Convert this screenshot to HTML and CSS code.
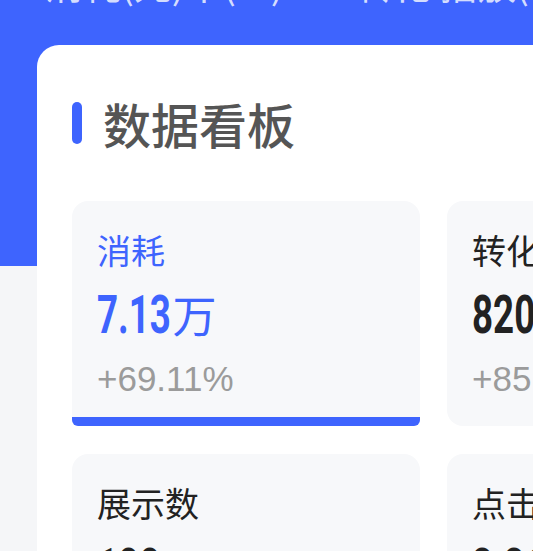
FILE: index.html
```html
<!DOCTYPE html>
<html lang="zh-CN">
<head>
<meta charset="utf-8">
<title>数据看板</title>
<link rel="stylesheet" href="styles.css">
</head>
<body>
<div class="page">
  <div class="hero-stats">
    <span class="hs hs1">消耗(元)</span>
    <span class="hs hs2">率(%)</span>
    <span class="hs hs3">转化</span>
    <span class="hs hs4">播放(</span>
  </div>
  <section class="board">
    <h2 class="board-title"><span class="title-bar"></span>数据看板</h2>
    <div class="metrics">
      <div class="metric active">
        <div class="metric-label">消耗</div>
        <div class="metric-value"><span class="num">7.13</span><span class="unit">万</span></div>
        <div class="metric-change">+69.11%</div>
      </div>
      <div class="metric">
        <div class="metric-label">转化数</div>
        <div class="metric-value"><span class="num">820</span></div>
        <div class="metric-change">+85.23%</div>
      </div>
      <div class="metric">
        <div class="metric-label">展示数</div>
        <div class="metric-value"><span class="num">188</span><span class="unit">万</span></div>
        <div class="metric-change">+42.56%</div>
      </div>
      <div class="metric">
        <div class="metric-label">点击数</div>
        <div class="metric-value"><span class="num">3.36</span><span class="unit">万</span></div>
        <div class="metric-change">+31.08%</div>
      </div>
    </div>
  </section>
</div>
</body>
</html>
```

FILE: styles.css
```css
html, body {
  margin: 0;
  padding: 0;
}
body {
  width: 533px;
  height: 551px;
  overflow: hidden;
  background: linear-gradient(#3e64fe 0, #3e64fe 266px, #f5f6f8 266px);
  font-family: "Noto Sans CJK SC", "Noto Sans", sans-serif;
}
.page {
  width: 900px;
}
.hero-stats {
  display: flex;
  height: 81px;
  margin-top: -36px;
  color: rgba(255, 255, 255, 0.8);
  font-size: 38px;
  line-height: 38px;
}
.hs { display: block; }
.hs1 { margin-left: 45px; width: 140px; }
.hs2 { width: 170px; }
.hs3 { width: 85px; }
.board {
  margin-left: 37px;
  width: 793px;
  background: #fff;
  border-radius: 22px;
  padding: 55px 35px 40px;
  box-sizing: border-box;
  min-height: 700px;
}
.board-title {
  display: flex;
  align-items: center;
  margin: 0;
  font-size: 48px;
  line-height: 48px;
  height: 46px;
  font-weight: 500;
  color: #555;
}
.title-bar {
  display: block;
  width: 10px;
  height: 42px;
  border-radius: 5px;
  background: #3e64fe;
  margin-right: 21px;
}
.metrics {
  margin-top: 55px;
  display: grid;
  grid-template-columns: 348px 348px;
  column-gap: 27px;
  row-gap: 28px;
}
.metric {
  height: 225px;
  box-sizing: border-box;
  background: #f7f8fa;
  border-radius: 16px;
  padding: 31px 25px 0;
  display: flex;
  flex-direction: column;
}
.metric.active {
  border-bottom: 9px solid #3e64fe;
  border-radius: 16px 16px 6px 6px;
}
.metric-label {
  font-size: 34px;
  line-height: 36px;
  color: #222;
}
.metric.active .metric-label { color: #3e64fe; }
.metric-value {
  margin-top: 20px;
  height: 53px;
  line-height: 53px;
  color: #222;
  display: flex;
  align-items: baseline;
}
.metric.active .metric-value { color: #3e64fe; }
.num {
  display: inline-block;
  font-family: Roboto, "Liberation Sans", sans-serif;
  font-weight: 700;
  font-size: 54px;
  transform: scaleX(0.68);
  transform-origin: left center;
}
.metric.active .num { margin-right: -34px; }
.metric:nth-child(3) .num { margin-right: -29px; }
.metric:nth-child(4) .num { margin-right: -34px; }
.unit {
  font-size: 44px;
  font-weight: 400;
  margin-left: 1px;
}
.metric-change {
  margin-top: 19px;
  font-family: "Liberation Sans", "Noto Sans", sans-serif;
  font-size: 35px;
  line-height: 38px;
  color: #9b9b9b;
}
```
